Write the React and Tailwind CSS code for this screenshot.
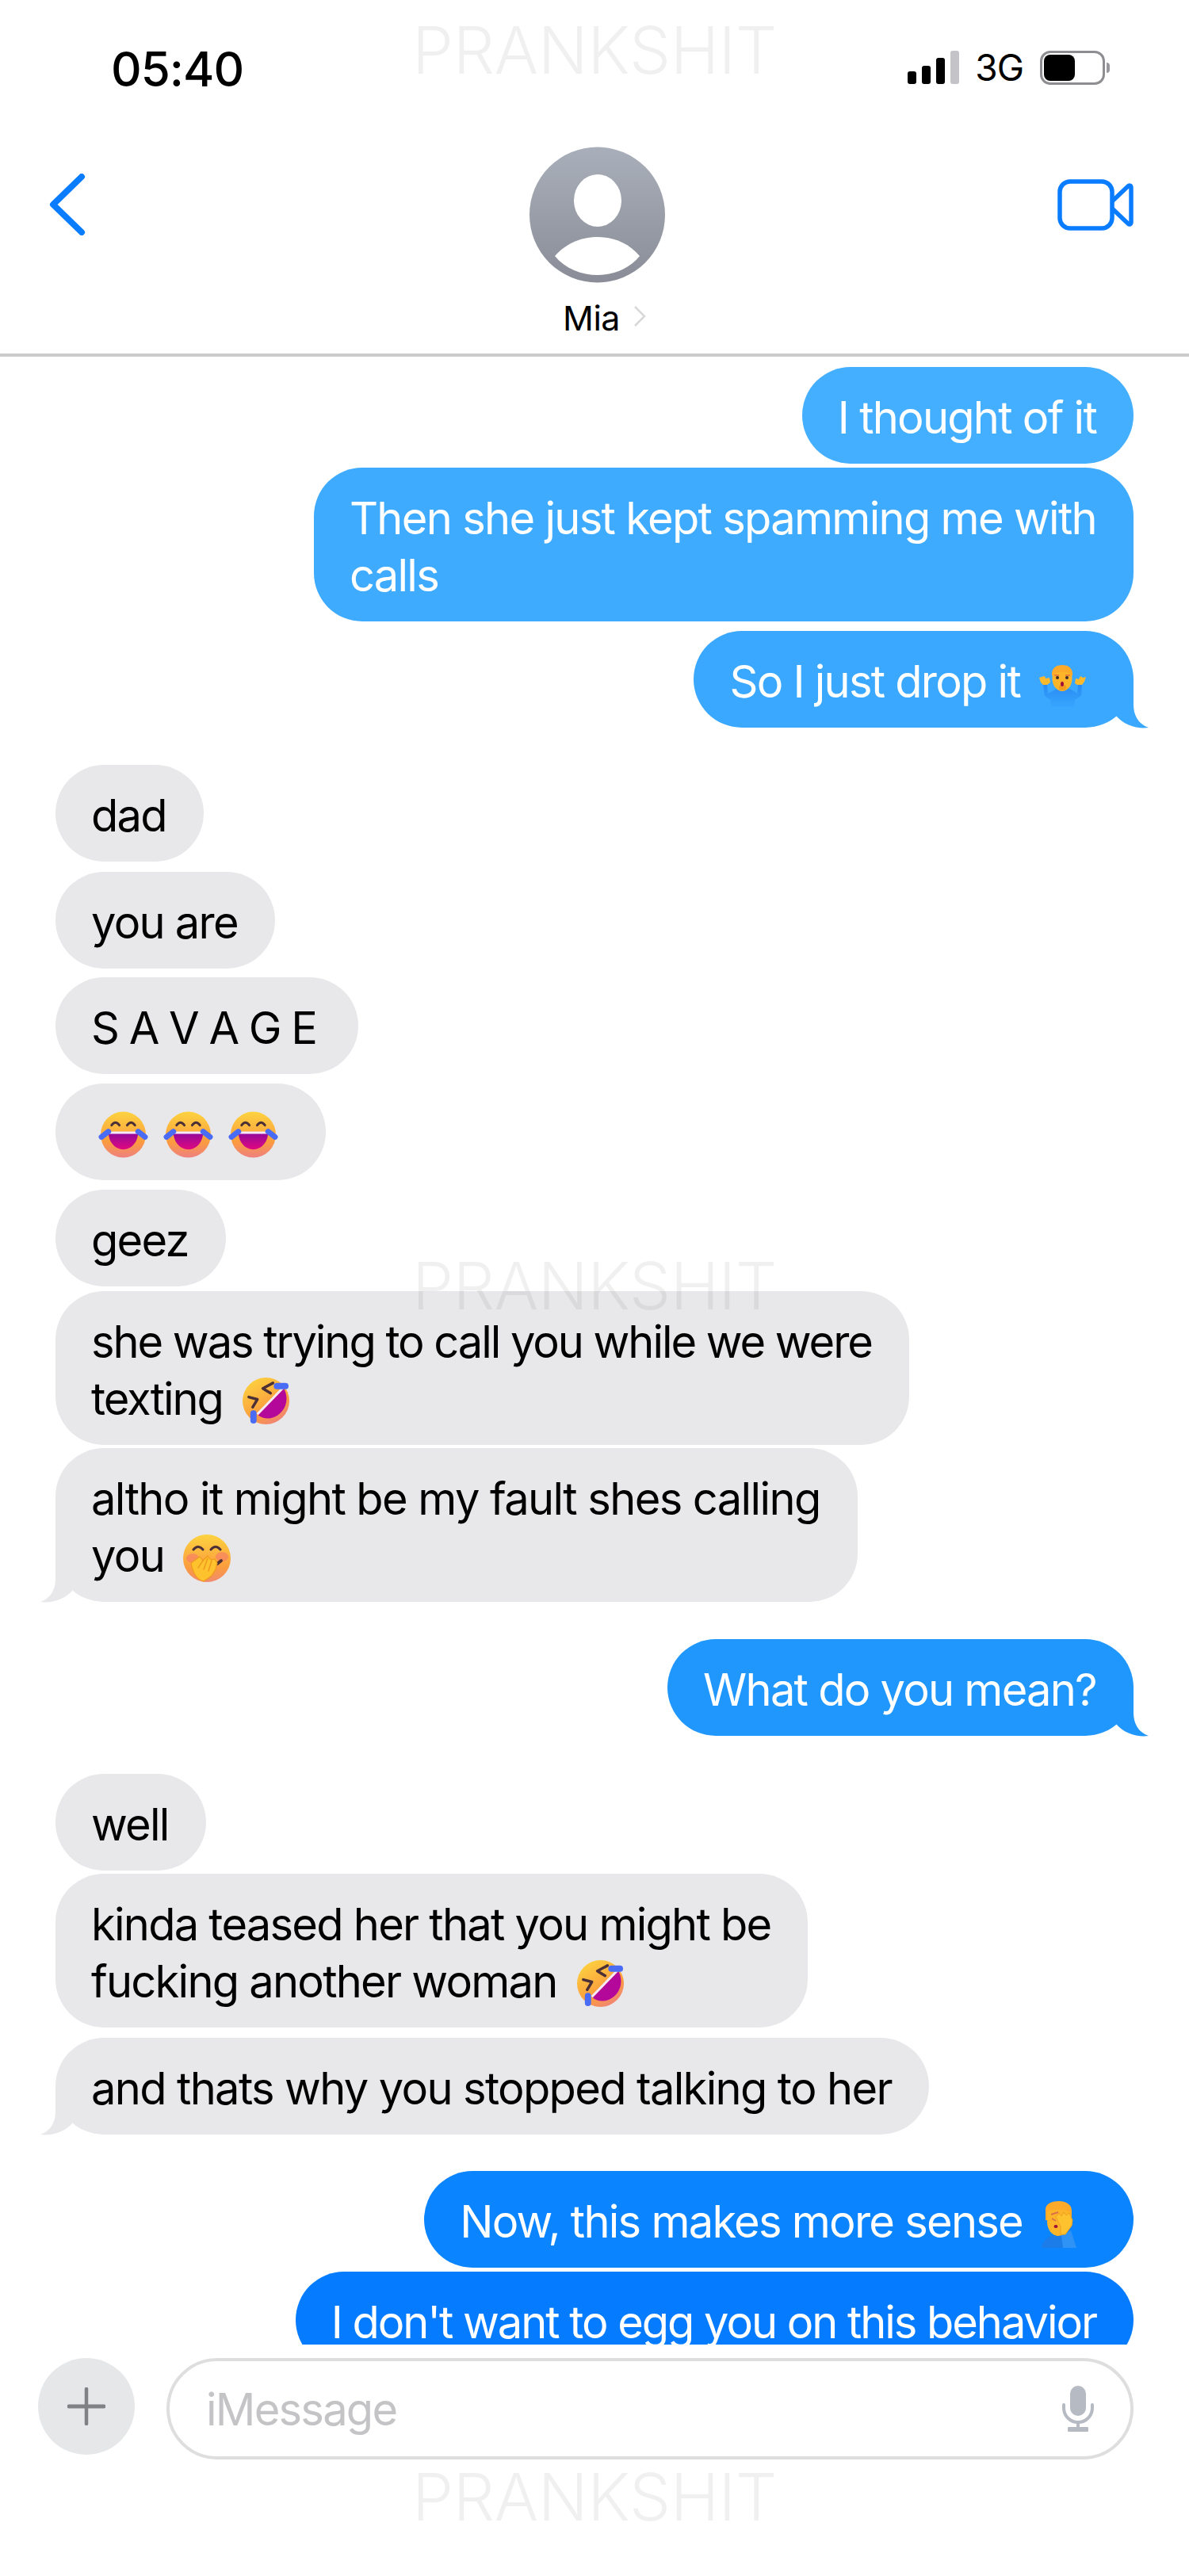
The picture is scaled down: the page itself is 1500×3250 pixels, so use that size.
import React from "react";

const Tail = ({ side, color }) => (
  <svg
    viewBox="0 0 42 62"
    className={side === "right" ? "absolute right-[-20px] bottom-[-1px] w-[42px] h-[62px]" : "absolute left-[-20px] bottom-[-1px] w-[42px] h-[62px] -scale-x-100"}
  >
    <path d="M22 0 L22 30 C21.5 44 27 56 41 61 C27 63 10 58 0 46 L4 30 L4 0 Z" fill={color} />
  </svg>
);

const Laugh = () => (
  <svg viewBox="0 0 64 60" className="inline-block w-[63px] h-[59px] align-[-14px]">
    <defs>
      <linearGradient id="lf" x1="0" y1="0" x2="0" y2="1">
        <stop offset="0" stopColor="#fdd33f" />
        <stop offset="0.65" stopColor="#fb9c3e" />
        <stop offset="1" stopColor="#ee8080" />
      </linearGradient>
      <linearGradient id="lm" x1="0" y1="0" x2="0" y2="1">
        <stop offset="0" stopColor="#8f0a9c" />
        <stop offset="1" stopColor="#e0087f" />
      </linearGradient>
    </defs>
    <ellipse cx="32" cy="30" rx="29" ry="29.5" fill="url(#lf)" />
    <path d="M13 27 H51 C51 40 42 49 32 49 C22 49 13 40 13 27 Z" fill="url(#lm)" />
    <rect x="13" y="26" width="38" height="3" fill="#f3e9fb" />
    <path d="M17 18 Q22 11 27 18 M37 18 Q42 11 47 18" stroke="#4b3036" strokeWidth="3" fill="none" strokeLinecap="round" />
    <path d="M4 33 L13 26 M51 26 L60 33" stroke="#4a6cf5" strokeWidth="7" strokeLinecap="round" />
  </svg>
);

const Rofl = () => (
  <svg viewBox="0 0 62 62" className="inline-block w-[61px] h-[61px] align-[-13px]">
    <defs>
      <linearGradient id="rf" x1="0.2" y1="0" x2="0.8" y2="1">
        <stop offset="0" stopColor="#fdd33f" />
        <stop offset="0.65" stopColor="#fb9c3e" />
        <stop offset="1" stopColor="#ee8080" />
      </linearGradient>
    </defs>
    <ellipse cx="31" cy="31" rx="30" ry="30" fill="url(#rf)" />
    <path d="M21 49 L54 15 C62 30 55 45 43 51 C35 55 27 54 21 49 Z" fill="#b4089a" />
    <path d="M20 48 L53 14" stroke="#f4e8fb" strokeWidth="3" />
    <path d="M40 8 L27 15 L37 21 M9 26 L20 29 L14 39" stroke="#4b3036" strokeWidth="3.5" fill="none" strokeLinecap="round" strokeLinejoin="round" />
    <path d="M45 12 H56 M15 47 V56" stroke="#4a6cf5" strokeWidth="8" strokeLinecap="round" />
  </svg>
);

const HandMouth = () => (
  <svg viewBox="0 0 60 60" className="inline-block w-[60px] h-[60px] align-[-13px]">
    <defs>
      <linearGradient id="hf" x1="0" y1="0" x2="0" y2="1">
        <stop offset="0" stopColor="#fdd33f" />
        <stop offset="0.7" stopColor="#fb9c3e" />
        <stop offset="1" stopColor="#f08a70" />
      </linearGradient>
    </defs>
    <ellipse cx="30" cy="30" rx="30" ry="30" fill="url(#hf)" />
    <ellipse cx="12" cy="30" rx="8" ry="6" fill="#f5726f" opacity="0.55" />
    <ellipse cx="49" cy="28" rx="8" ry="6" fill="#f5726f" opacity="0.55" />
    <path d="M13 19 Q19 12 25 19 M35 19 Q41 12 47 19" stroke="#4b3036" strokeWidth="3" fill="none" strokeLinecap="round" />
    <path d="M43 37 L48 33" stroke="#4b3036" strokeWidth="4" strokeLinecap="round" />
    <path d="M10 36 L21 28 L25 33 L31 27 L35 32 L40 31 L43 36 L41 44 L36 52 L26 59 C17 57 12 47 10 36 Z" fill="#fdc22d" stroke="#ef9a1f" strokeWidth="1.2" strokeLinejoin="round" />
    <path d="M25 33 L19 42 M31 30 L26 44 M36 33 L32 46" stroke="#ef9a1f" strokeWidth="1.5" strokeLinecap="round" />
  </svg>
);

const Shrug = () => (
  <svg viewBox="0 0 59 53" className="inline-block w-[59px] h-[53px] align-[-12px]">
    <defs>
      <linearGradient id="sb" x1="0" y1="0" x2="0" y2="1">
        <stop offset="0" stopColor="#2a8bf2" />
        <stop offset="1" stopColor="#37a6ff" />
      </linearGradient>
    </defs>
    <path d="M5 25 L7 39 L14 44 L15 53 L44 53 L45 44 L53 39 L54 25 L49 25 L48 36 L42 32 L36 29 L24 29 L17 33 L11 36 L10 25 Z" fill="url(#sb)" />
    <path d="M0 16 L3 15 L7 14 L8 17 L13 16 L14 22 L10 25 L5 25 L2 22 Z M59 15 L55 16 L52 14 L50 18 L46 17 L45 23 L48 25 L54 25 L57 21 Z" fill="#fdb92c" />
    <ellipse cx="29" cy="17" rx="12.5" ry="16" fill="#fcb528" />
    <rect x="25" y="25" width="9" height="7" rx="3" fill="#f09a20" />
    <path d="M16 14 C15 3 22 0 29 0 C37 0 43 4 42 14 C38 7 21 7 16 14 Z" fill="#fda92a" />
    <path d="M19 13 L25 13 M33 13 L39 13" stroke="#e26a3c" strokeWidth="1.5" />
    <circle cx="23" cy="16" r="2" fill="#3a2a2a" />
    <circle cx="35" cy="16" r="2" fill="#3a2a2a" />
    <ellipse cx="29" cy="24" rx="2" ry="3" fill="#a00f3a" />
  </svg>
);

const Palm = () => (
  <svg viewBox="0 0 44 59" className="inline-block w-[44px] h-[59px] align-[-13px]">
    <path d="M0 59 C1 50 8 44 20 42 L36 37 L44 59 Z" fill="#1c7ce8" />
    <path d="M25 43 L37 37 L44 59 L27 59 Z" fill="#2f92f5" />
    <path d="M5 12 C4 3 14 0 22 0 C30 0 38 4 38 12 L38 24 L5 24 Z" fill="#fda92a" />
    <path d="M7 14 C7 10 34 10 36 14 L36 30 C34 40 26 44 20 44 C13 43 7 36 7 26 Z" fill="#fcb528" />
    <path d="M12 17 L21 14 M13 22 L18 25" stroke="#d9704a" strokeWidth="2" />
    <ellipse cx="18" cy="32" rx="2.5" ry="2" fill="#a00f3a" />
    <path d="M18 20 L22 15 L25 19 L28 14 L31 18 L35 15 L38 22 L39 24 L38 31 L30 42 L24 42 L24 32 Z" fill="#fdc22d" stroke="#ef9f25" strokeWidth="1" strokeLinejoin="round" />
  </svg>
);

const Bubble = ({ side, color, mt, tail, track = "tracking-[-1.75px]", children }) => (
  <div
    className={`relative w-fit pl-[45px] pr-[47px] pt-[28px] pb-[22px] rounded-[61px] text-[56px] leading-[72px] whitespace-nowrap ${track} ${mt} ${
      side === "right" ? "self-end text-white" : "self-start text-black"
    }`}
    style={{ backgroundColor: color }}
  >
    {children}
    {tail && <Tail side={side} color={color} />}
  </div>
);

const GREY = "#e8e8ea";

const Watermark = ({ top }) => (
  <div
    className="absolute left-[520px] w-[456px] text-center text-[83px] leading-[60px] font-light tracking-[-0.6px] text-[#0000000f] pointer-events-none"
    style={{ top }}
  >
    PRANKSHIT
  </div>
);

export default function App() {
  return (
    <div className="relative w-[1500px] h-[3250px] overflow-hidden bg-white flex flex-col font-['Inter',sans-serif]">
      <header className="h-[450px] shrink-0 border-b-[4px] border-[#cbcbcb]">
        <div className="h-[170px] flex items-center justify-between pl-[140px] pr-[100px]">
          <span className="pt-[3px] text-[60px] leading-none font-medium tracking-[-1px] text-black">05:40</span>
          <div className="flex items-center">
            <div className="flex items-end gap-[7px] h-[42px]">
              <span className="w-[11px] h-[16px] rounded-[3px] bg-black" />
              <span className="w-[11px] h-[23px] rounded-[3px] bg-black" />
              <span className="w-[11px] h-[33px] rounded-[3px] bg-black" />
              <span className="w-[11px] h-[42px] rounded-[3px] bg-[#c3c3c8]" />
            </div>
            <span className="ml-[20px] text-[46px] leading-none text-black tracking-[-1px]">3G</span>
            <div className="ml-[21px] flex items-center">
              <div className="w-[82px] h-[43px] rounded-[13px] border-[3px] border-[#8e8e92] p-[2px]">
                <div className="w-[39px] h-full rounded-[8px] bg-black" />
              </div>
              <span className="ml-[2px] w-[4px] h-[13px] rounded-r-[4px] bg-[#98989c]" />
            </div>
          </div>
        </div>
        <div className="flex items-start justify-between px-[62px] pt-[15px]">
          <div className="w-[104px]">
            <svg viewBox="0 0 46 78" className="mt-[34px] w-[46px] h-[78px]">
              <path d="M41 4 L5 39 L41 74" fill="none" stroke="#0a7cff" strokeWidth="8" strokeLinecap="round" strokeLinejoin="round" />
            </svg>
          </div>
          <div className="ml-[7px] flex flex-col items-center">
            <svg viewBox="0 0 171 172" className="w-[171px] h-[172px]">
              <defs>
                <linearGradient id="av" x1="0" y1="0" x2="0" y2="1">
                  <stop offset="0" stopColor="#a9afba" />
                  <stop offset="1" stopColor="#8a8d97" />
                </linearGradient>
              </defs>
              <circle cx="85.5" cy="86" r="85.5" fill="url(#av)" />
              <ellipse cx="86" cy="68" rx="30" ry="33" fill="#fff" />
              <path d="M32 138 C48 120 68 114 86 114 C104 114 124 120 139 138 C126 154 106 162 86 162 C66 162 45 154 32 138 Z" fill="#fff" />
            </svg>
            <div className="mt-[19px] ml-[18px] flex items-center">
              <span className="text-[43px] leading-[50px] text-black tracking-[-0.5px]">Mia</span>
              <svg viewBox="0 0 16 26" className="ml-[17px] mb-[4px] w-[16px] h-[26px]">
                <path d="M2 1 L14 13 L2 25" fill="none" stroke="#d8d8d8" strokeWidth="2.5" />
              </svg>
            </div>
          </div>
          <div className="w-[104px]">
            <svg viewBox="0 0 96 66" className="mt-[41px] w-[96px] h-[66px]">
              <rect x="3" y="3" width="66" height="59" rx="13" fill="none" stroke="#0a7cff" strokeWidth="5.5" />
              <path d="M69 28 L89 9 C91 7 93 8 93 11 L93 54 C93 57 91 58 89 56 L69 37" fill="none" stroke="#0a7cff" strokeWidth="5.5" strokeLinejoin="round" />
            </svg>
          </div>
        </div>
      </header>

      <main className="h-[2508px] shrink-0 overflow-hidden flex flex-col px-[70px] pt-[13px]">
        <Bubble side="right" color="#44aeff" mt="mt-0">I thought of it</Bubble>
        <Bubble side="right" color="#3eabff" mt="mt-[5px]" track="tracking-[-1.7px]">
          Then she just kept spamming me with
          <br />
          calls
        </Bubble>
        <Bubble side="right" color="#3aa8ff" mt="mt-[12px]" tail>
          So I just drop it <span className="ml-[10px] mr-[13px]"><Shrug /></span>
        </Bubble>
        <Bubble side="left" color={GREY} mt="mt-[47px]">dad</Bubble>
        <Bubble side="left" color={GREY} mt="mt-[13px]">you are</Bubble>
        <Bubble side="left" color={GREY} mt="mt-[11px]" track="tracking-[-2px]">
          <span className="mr-[6px]">S A V A G E</span>
        </Bubble>
        <Bubble side="left" color={GREY} mt="mt-[12px]">
          <span className="flex gap-[19px] h-[72px] items-center ml-[9px] mr-[13px]">
            <Laugh />
            <Laugh />
            <Laugh />
          </span>
        </Bubble>
        <Bubble side="left" color={GREY} mt="mt-[12px]">geez</Bubble>
        <Bubble side="left" color={GREY} mt="mt-[6px]" track="tracking-[-2.05px]">
          she was trying to call you while we were
          <br />
          texting <span className="ml-[10px]"><Rofl /></span>
        </Bubble>
        <Bubble side="left" color={GREY} mt="mt-[4px]" tail track="tracking-[-1.6px]">
          altho it might be my fault shes calling
          <br />
          you <span className="ml-[10px]"><HandMouth /></span>
        </Bubble>
        <Bubble side="right" color="#2097fd" mt="mt-[47px]" tail>What do you mean?</Bubble>
        <Bubble side="left" color={GREY} mt="mt-[48px]">well</Bubble>
        <Bubble side="left" color={GREY} mt="mt-[4px]">
          kinda teased her that you might be
          <br />
          fucking another woman <span className="ml-[10px]"><Rofl /></span>
        </Bubble>
        <Bubble side="left" color={GREY} mt="mt-[13px]" tail track="tracking-[-1.65px]">and thats why you stopped talking to her</Bubble>
        <Bubble side="right" color="#0b84ff" mt="mt-[46px]">
          Now, this makes more sense <span className="ml-[10px] mr-[25px]"><Palm /></span>
        </Bubble>
        <Bubble side="right" color="#057cff" mt="mt-[5px]" track="tracking-[-2.05px]">I don't want to egg you on this behavior</Bubble>
      </main>

      <footer className="flex items-start pl-[48px] pt-[17px] gap-[40px]">
        <div className="w-[122px] h-[122px] shrink-0 rounded-full bg-[#e6e7e9] flex items-center justify-center">
          <svg viewBox="0 0 48 48" className="w-[48px] h-[48px]">
            <path d="M24 2 V46" stroke="#808184" strokeWidth="4.5" strokeLinecap="round" />
            <path d="M2 24 H46" stroke="#808184" strokeWidth="5" strokeLinecap="round" />
          </svg>
        </div>
        <div className="w-[1220px] h-[128px] rounded-[64px] border-[4px] border-[#dedede] flex items-center justify-between pl-[46px] pr-[46px]">
          <span className="pt-[2px] text-[56px] leading-none tracking-[-1.75px] text-[#c4c4c6]">iMessage</span>
          <svg viewBox="0 0 40 58" className="w-[40px] h-[58px]">
            <rect x="10" y="0" width="20" height="38" rx="10" fill="#b6bac2" />
            <path d="M2 24 V28 C2 38 10 46 20 46 C30 46 38 38 38 28 V24" fill="none" stroke="#b6bac2" strokeWidth="4" strokeLinecap="round" />
            <rect x="18" y="46" width="4" height="8" fill="#b6bac2" />
            <rect x="7" y="52" width="26" height="6" rx="1" fill="#b6bac2" />
          </svg>
        </div>
      </footer>

      <Watermark top="33px" />
      <Watermark top="1592px" />
      <Watermark top="3120px" />
    </div>
  );
}
